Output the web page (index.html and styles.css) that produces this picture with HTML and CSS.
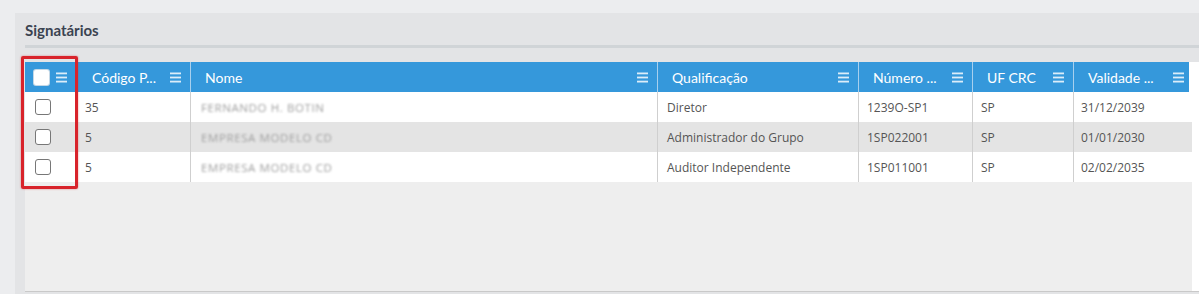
FILE: index.html
```html
<!DOCTYPE html>
<html lang="pt-BR">
  <head>
    <meta charset="UTF-8" />
    <meta name="viewport" content="width=device-width, initial-scale=1.0" />
    <title>Signatários</title>
    <link rel="stylesheet" href="styles.css">
  </head>

  <body>
    <div class="panel">
      <div class="panel-title">Signatários</div>

      <div class="grid">
        <!-- destaque vermelho da coluna de seleção -->
        <div class="highlight"></div>

        <div class="grid-head">
          <div class="hcell first">
            <span class="hcheck"></span>
            <svg class="menu" width="11" height="11" viewBox="0 0 11 11"><rect x="0" y="0.5" width="11" height="1.8"/><rect x="0" y="4.6" width="11" height="1.8"/><rect x="0" y="8.7" width="11" height="1.8"/></svg>
          </div>
          <div class="hcell code">
            <span>Código P...</span>
            <svg class="menu" width="11" height="11" viewBox="0 0 11 11"><rect x="0" y="0.5" width="11" height="1.8"/><rect x="0" y="4.6" width="11" height="1.8"/><rect x="0" y="8.7" width="11" height="1.8"/></svg>
          </div>
          <div class="hcell">
            <span>Nome</span>
            <svg class="menu" width="11" height="11" viewBox="0 0 11 11"><rect x="0" y="0.5" width="11" height="1.8"/><rect x="0" y="4.6" width="11" height="1.8"/><rect x="0" y="8.7" width="11" height="1.8"/></svg>
          </div>
          <div class="hcell">
            <span>Qualificação</span>
            <svg class="menu" width="11" height="11" viewBox="0 0 11 11"><rect x="0" y="0.5" width="11" height="1.8"/><rect x="0" y="4.6" width="11" height="1.8"/><rect x="0" y="8.7" width="11" height="1.8"/></svg>
          </div>
          <div class="hcell">
            <span>Número ...</span>
            <svg class="menu" width="11" height="11" viewBox="0 0 11 11"><rect x="0" y="0.5" width="11" height="1.8"/><rect x="0" y="4.6" width="11" height="1.8"/><rect x="0" y="8.7" width="11" height="1.8"/></svg>
          </div>
          <div class="hcell">
            <span>UF CRC</span>
            <svg class="menu" width="11" height="11" viewBox="0 0 11 11"><rect x="0" y="0.5" width="11" height="1.8"/><rect x="0" y="4.6" width="11" height="1.8"/><rect x="0" y="8.7" width="11" height="1.8"/></svg>
          </div>
          <div class="hcell last">
            <span>Validade ...</span>
            <svg class="menu" width="11" height="11" viewBox="0 0 11 11"><rect x="0" y="0.5" width="11" height="1.8"/><rect x="0" y="4.6" width="11" height="1.8"/><rect x="0" y="8.7" width="11" height="1.8"/></svg>
          </div>
        </div>

        <div class="grid-body">
          <div class="row">
            <div class="cell first"><span class="check"></span></div>
            <div class="cell code">35</div>
            <div class="cell"><span class="blur">FERNANDO H. BOTIN</span></div>
            <div class="cell">Diretor</div>
            <div class="cell">1239O-SP1</div>
            <div class="cell">SP</div>
            <div class="cell last">31/12/2039</div>
          </div>
          <div class="row alt">
            <div class="cell first"><span class="check"></span></div>
            <div class="cell code">5</div>
            <div class="cell"><span class="blur">EMPRESA MODELO CD</span></div>
            <div class="cell">Administrador do Grupo</div>
            <div class="cell">1SP022001</div>
            <div class="cell">SP</div>
            <div class="cell last">01/01/2030</div>
          </div>
          <div class="row">
            <div class="cell first"><span class="check"></span></div>
            <div class="cell code">5</div>
            <div class="cell"><span class="blur">EMPRESA MODELO CD</span></div>
            <div class="cell">Auditor Independente</div>
            <div class="cell">1SP011001</div>
            <div class="cell">SP</div>
            <div class="cell last">02/02/2035</div>
          </div>
        </div>
      </div>
    </div>
  </body>
</html>
```

FILE: styles.css
```css
body {
  margin: 0;
  background-color: #ecedef;
  font-family: "Open Sans", sans-serif;
}
.panel {
  margin: 13px 0 0 15px;
  padding-left: 10px;
  height: 281px;
  background-color: #e3e4e6;
}
.panel-title {
  padding: 8px 0 5px;
  line-height: 19px;
  font-family: Lato, sans-serif;
  font-weight: bold;
  font-size: 15px;
  color: #3b4351;
  border-bottom: 3px solid #d0d4d7;
}
.grid {
  position: relative;
  margin-top: 14px;
  width: 1174px;
  height: 229px;
  background-color: #fff;
  border-bottom: 1px solid #c9c9c9;
}
.highlight {
  position: absolute;
  left: -4px;
  top: -6px;
  width: 51px;
  height: 127px;
  border: 3px solid #d8232b;
  border-radius: 2px;
  box-shadow: 0 0 2px rgba(217, 38, 45, 0.6);
  pointer-events: none;
}
.grid-head,
.row {
  display: grid;
  grid-template-columns: 55px 111px 467px 201px 114px 101px 1fr;
  height: 30px;
}
.grid-head {
  width: 1164px;
  background-color: #3598db;
  font-family: Lato, sans-serif;
  font-size: 14px;
  color: #fff;
}
.hcell {
  display: flex;
  align-items: center;
  justify-content: space-between;
  padding: 0 9px 0 14px;
  border-right: 1px solid #a8d0ee;
}
.hcell.first {
  padding: 0 13px 0 9px;
  border-right: none;
}
.hcell.code {
  padding-left: 12px;
}
.hcell.last {
  border-right: none;
  padding-right: 5px;
}
.menu {
  fill: #dcedf9;
}
.hcheck {
  width: 15px;
  height: 15px;
  background-color: #fff;
  border-radius: 2px;
  box-shadow: 0 0 0 1px #c5d8e6;
}
.grid-body {
  width: 1167px;
  height: 199px;
  background-color: #eeeeee;
}
.row {
  background-color: #fff;
  font-size: 12px;
  color: #555;
}
.row.alt {
  background-color: #e4e4e4;
}
.cell {
  display: flex;
  align-items: center;
  padding-left: 8px;
  border-right: 1px solid #cfcfcf;
  white-space: nowrap;
}
.cell.first {
  padding-left: 10px;
  border-right: none;
}
.cell.code {
  padding-left: 5px;
}
.cell:nth-child(3) {
  padding-left: 10px;
}
.cell:nth-child(4) {
  padding-left: 9px;
}
.cell.last {
  padding-left: 7px;
  border-right: none;
}
.check {
  width: 14px;
  height: 14px;
  border: 1px solid #777;
  border-radius: 3px;
  background-color: #fff;
}
.blur {
  font-size: 11.5px;
  letter-spacing: 0.6px;
  color: #a0a0a0;
  filter: blur(0.9px);
}
```
